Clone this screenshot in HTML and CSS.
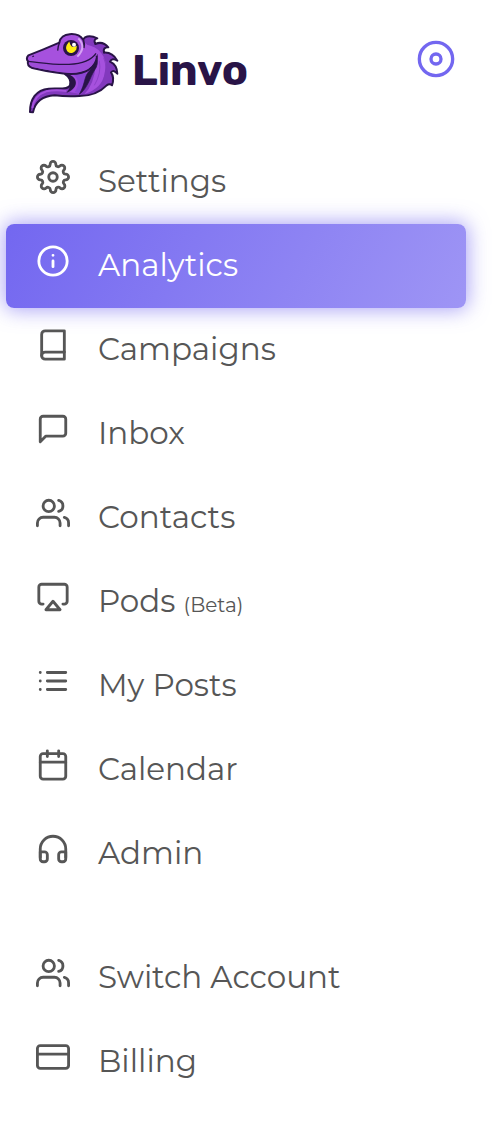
FILE: index.html
```html
<!DOCTYPE html>
<html lang="en">
<head>
    <meta charset="UTF-8">
    <meta name="viewport" content="width=device-width, initial-scale=1.0">
    <title>Linvo</title>
    <link rel="stylesheet" href="styles.css">
</head>
<body>
    <aside class="sidebar">
        <header class="sidebar-header">
            <a class="brand" href="#">
                <svg class="brand-logo" viewBox="0 0 342 300" aria-hidden="true">
                    <!-- crest and neck -->
                    <path d="M196 52 L207 40 Q222 32 244 43 Q231 46 238 60 Q260 50 277 70 Q260 69 264 86 Q289 84 304 110 Q288 100 282 113 Q303 122 304 149 Q294 136 285 145 Q296 160 288 184 Q281 178 272 184 C250 207 220 216 190 216 Q150 218 116 214 C80 216 58 232 51 265 L42 264 C42 226 60 197 98 194 C128 192 157 198 162 184 C166 172 160 157 147 150 Z" fill="#8239bd" stroke="#291447" stroke-width="6" stroke-linejoin="round"/>
                    <path d="M205 62 Q240 64 256 88 Q276 111 266 148 Q260 192 205 211 Q235 180 239 123 Z" fill="#a651de"/>
                    <path d="M155 149 C186 166 184 190 160 204 L190 209 C219 183 228 152 238 117 Q202 150 155 149" fill="#a24bdf"/>
                    <path d="M170 151 Q200 172 175 205 L191 208 Q213 178 211 143 Z" fill="#8d45d6"/>
                    <path d="M243 91 Q248 124 236 138 C221 162 215 193 190 211 C210 175 203 156 222 139 Q239 121 243 91 Z" fill="#291447" stroke="#291447" stroke-width="2"/>
                    <path d="M150 148 C192 161 187 194 151 207 Q177 177 150 148 Z" fill="#291447"/>
                    <path d="M49 252 Q54 214 91 202 Q119 196 151 201" fill="none" stroke="#a651de" stroke-width="6"/>
                    <path d="M263 101 Q277 135 261 169 M250 110 Q257 148 235 184" fill="none" stroke="#8239bd" stroke-width="2"/>
                    <!-- head -->
                    <path d="M37 94 Q80 78 130 56 C134 25 185 22 202 48 Q210 65 232 70 Q247 81 242 104 C235 132 210 150 165 150 C125 149 88 141 49 132 Q32 125 36 112 Q29 103 37 94 Z" fill="#a651de"/>
                    <path d="M242 95 C238 132 210 150 165 150 C125 149 88 141 49 132 Q32 125 36 112 Q29 103 37 94 Q80 78 130 56 C134 25 185 22 202 48 Q206 58 203 72" fill="none" stroke="#291447" stroke-width="6" stroke-linejoin="round"/>
                    <path d="M40 115 Q95 121 144 124 Q212 125 240 96 Q236 142 165 146 Q103 141 48 128 Q39 122 40 115 Z" fill="#9d4cd8"/>
                    <path d="M36 112 C91 118 116 123 159 121 Q220 118 240 88" fill="none" stroke="#291447" stroke-width="4"/>
                    <path d="M125 80 Q126 65 131 55 M49 98 L54 96" fill="none" stroke="#291447" stroke-width="4"/>
                    <path d="M187 43 Q213 69 184 98" fill="none" stroke="#d6a4f4" stroke-width="6"/>
                    <!-- eye -->
                    <circle cx="165" cy="72" r="24" fill="#291447"/>
                    <path d="M159 57 Q148 70 155 80 Q168 92 179 76 L180 69 Q169 73 165 68 Q161 64 159 57 Z" fill="#ffee13" stroke="#ffee13" stroke-width="4"/>
                    <circle cx="174" cy="62" r="6" fill="#fff"/>
                </svg>
                <span class="brand-name">Linvo</span>
            </a>
            <button class="toggle" type="button" aria-label="Toggle menu">
                <svg class="toggle-icon" viewBox="0 0 24 24"><circle cx="12" cy="12" r="10"/><circle cx="12" cy="12" r="3"/></svg>
            </button>
        </header>

        <nav class="menu">
            <a class="menu-item" href="#">
                <svg class="icon" viewBox="0 0 24 24"><circle cx="12" cy="12" r="3"/><path d="M19.4 15a1.65 1.65 0 0 0 .33 1.82l.06.06a2 2 0 0 1 0 2.83 2 2 0 0 1-2.83 0l-.06-.06a1.65 1.65 0 0 0-1.82-.33 1.65 1.65 0 0 0-1 1.51V21a2 2 0 0 1-2 2 2 2 0 0 1-2-2v-.09A1.65 1.65 0 0 0 9 19.4a1.65 1.65 0 0 0-1.82.33l-.06.06a2 2 0 0 1-2.83 0 2 2 0 0 1 0-2.83l.06-.06a1.65 1.65 0 0 0 .33-1.82 1.65 1.65 0 0 0-1.51-1H3a2 2 0 0 1-2-2 2 2 0 0 1 2-2h.09A1.65 1.65 0 0 0 4.6 9a1.65 1.65 0 0 0-.33-1.82l-.06-.06a2 2 0 0 1 0-2.83 2 2 0 0 1 2.83 0l.06.06a1.65 1.65 0 0 0 1.82.33H9a1.65 1.65 0 0 0 1-1.51V3a2 2 0 0 1 2-2 2 2 0 0 1 2 2v.09a1.65 1.65 0 0 0 1 1.51 1.65 1.65 0 0 0 1.82-.33l.06-.06a2 2 0 0 1 2.83 0 2 2 0 0 1 0 2.83l-.06.06a1.65 1.65 0 0 0-.33 1.82V9a1.65 1.65 0 0 0 1.51 1H21a2 2 0 0 1 2 2 2 2 0 0 1-2 2h-.09a1.65 1.65 0 0 0-1.51 1z"/></svg>
                <span>Settings</span>
            </a>
            <a class="menu-item active" href="#" aria-current="page">
                <svg class="icon" viewBox="0 0 24 24"><circle cx="12" cy="12" r="10"/><path d="M12 16v-4M12 8h.01"/></svg>
                <span>Analytics</span>
            </a>
            <a class="menu-item" href="#">
                <svg class="icon" viewBox="0 0 24 24"><path d="M4 19.5A2.5 2.5 0 0 1 6.5 17H20"/><path d="M6.5 2H20v20H6.5A2.5 2.5 0 0 1 4 19.5v-15A2.5 2.5 0 0 1 6.5 2z"/></svg>
                <span>Campaigns</span>
            </a>
            <a class="menu-item" href="#">
                <svg class="icon" viewBox="0 0 24 24"><path d="M21 15a2 2 0 0 1-2 2H7l-4 4V5a2 2 0 0 1 2-2h14a2 2 0 0 1 2 2z"/></svg>
                <span>Inbox</span>
            </a>
            <a class="menu-item" href="#">
                <svg class="icon" viewBox="0 0 24 24"><path d="M17 21v-2a4 4 0 0 0-4-4H5a4 4 0 0 0-4 4v2"/><circle cx="9" cy="7" r="4"/><path d="M23 21v-2a4 4 0 0 0-3-3.87M16 3.13a4 4 0 0 1 0 7.75"/></svg>
                <span>Contacts</span>
            </a>
            <a class="menu-item" href="#">
                <svg class="icon" viewBox="0 0 24 24"><path d="M5 17H4a2 2 0 0 1-2-2V5a2 2 0 0 1 2-2h16a2 2 0 0 1 2 2v10a2 2 0 0 1-2 2h-1"/><path d="M12 15l5 6H7l5-6z"/></svg>
                <span>Pods <small class="tag">(Beta)</small></span>
            </a>
            <a class="menu-item" href="#">
                <svg class="icon" viewBox="0 0 24 24"><path d="M8 6h13M8 12h13M8 18h13M3 6h.01M3 12h.01M3 18h.01"/></svg>
                <span>My Posts</span>
            </a>
            <a class="menu-item" href="#">
                <svg class="icon" viewBox="0 0 24 24"><rect x="3" y="4" width="18" height="18" rx="2"/><path d="M16 2v4M8 2v4M3 10h18"/></svg>
                <span>Calendar</span>
            </a>
            <a class="menu-item" href="#">
                <svg class="icon" viewBox="0 0 24 24"><path d="M3 18v-6a9 9 0 0 1 18 0v6"/><path d="M21 19a2 2 0 0 1-2 2h-1a2 2 0 0 1-2-2v-3a2 2 0 0 1 2-2h3zM3 19a2 2 0 0 0 2 2h1a2 2 0 0 0 2-2v-3a2 2 0 0 0-2-2H3z"/></svg>
                <span>Admin</span>
            </a>
        </nav>

        <nav class="menu account-menu">
            <a class="menu-item" href="#">
                <svg class="icon" viewBox="0 0 24 24"><path d="M17 21v-2a4 4 0 0 0-4-4H5a4 4 0 0 0-4 4v2"/><circle cx="9" cy="7" r="4"/><path d="M23 21v-2a4 4 0 0 0-3-3.87M16 3.13a4 4 0 0 1 0 7.75"/></svg>
                <span>Switch Account</span>
            </a>
            <a class="menu-item" href="#">
                <svg class="icon" viewBox="0 0 24 24"><rect x="1" y="4" width="22" height="16" rx="2"/><path d="M1 10h22"/></svg>
                <span>Billing</span>
            </a>
        </nav>
    </aside>
</body>
</html>
```
FILE: styles.css
```css
* {
    box-sizing: border-box;
}
body {
    margin: 0;
    background-color: #fff;
    color: #565656;
    font-family: Montserrat, Inter, sans-serif;
}
.sidebar {
    padding: 0 28px 22px 6px;
}
.sidebar-header {
    display: flex;
    justify-content: space-between;
    align-items: flex-start;
    padding: 24px 10px 16px;
}
.brand {
    display: flex;
    align-items: center;
    gap: 2px;
    color: #291447;
    text-decoration: none;
}
.brand-logo {
    width: 114px;
    height: 100px;
}
.brand-name {
    font-family: Rubik, Roboto, sans-serif;
    font-size: 43px;
    font-weight: 700;
    line-height: 52px;
    padding-bottom: 6px;
}
.toggle {
    margin-top: 15px;
    padding: 0;
    border: none;
    background: none;
    color: #7367f0;
    cursor: pointer;
}
.toggle-icon {
    display: block;
    width: 40px;
    height: 40px;
}
.icon, .toggle-icon {
    fill: none;
    stroke: currentColor;
    stroke-width: 2;
    stroke-linecap: round;
    stroke-linejoin: round;
}
.menu {
    display: flex;
    flex-direction: column;
}
.account-menu {
    margin-top: 40px;
}
.menu-item {
    display: flex;
    align-items: flex-start;
    gap: 28px;
    padding: 20px 30px 22px;
    border-radius: 8px;
    color: inherit;
    font-size: 31px;
    line-height: 42px;
    text-decoration: none;
}
.menu-item.active {
    background: linear-gradient(118deg, #7367f0, #9e95f5);
    box-shadow: 0 0 20px 2px rgba(115, 103, 240, 0.6);
    color: #fff;
}
.icon {
    flex: none;
    width: 34px;
    height: 34px;
}
.tag {
    font-size: 20px;
    line-height: 1;
}
```
